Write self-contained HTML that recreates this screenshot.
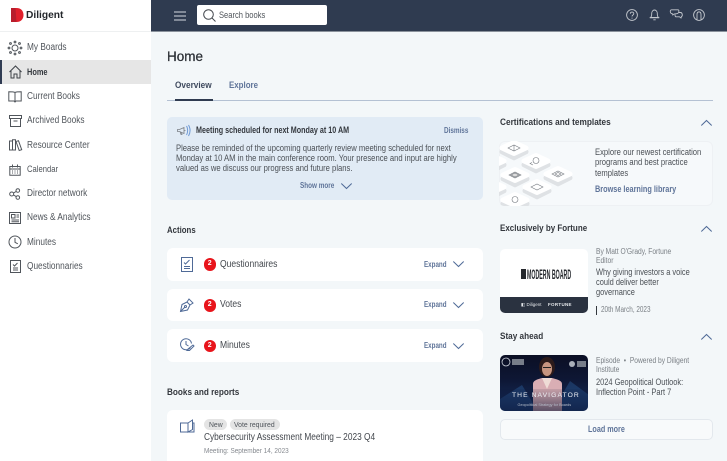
<!DOCTYPE html>
<html><head><meta charset="utf-8">
<style>
*{box-sizing:border-box}
html,body{margin:0;padding:0;width:727px;height:461px;overflow:hidden}
#w{position:absolute;left:0;top:0;width:727px;height:461px;overflow:hidden;background:#f3f7f9;font-family:"Liberation Sans",sans-serif;color:#33373d}
.t{position:absolute;white-space:nowrap;line-height:1;transform-origin:0 0}
.a{position:absolute}
svg{position:absolute;overflow:visible;fill:none}
.nav{font-size:9.8px;color:#50555b;left:27px;transform:scaleX(.845)}
.ic{stroke:#50555b;stroke-width:1}
.blue{stroke:#4f6a97;stroke-width:1}
.card{position:absolute;left:167px;width:316px;background:#fff;border-radius:6px}
.exp{font-size:8px;font-weight:bold;color:#5f7499;left:424px;transform:scaleX(.78)}
.badge{position:absolute;left:203.5px;width:12.5px;height:12.5px;border-radius:50%;background:#e8141b;color:#fff;font-size:7px;font-weight:bold;text-align:center;line-height:12.5px}
.lbl{font-size:9.9px;color:#44484e;left:220px;transform:scaleX(.865)}
.h{font-size:9.6px;font-weight:bold;color:#33373d}
.p{font-size:9px;color:#4b5056;transform:scaleX(.85)}
.q{font-size:9px;color:#4b5056;transform:scaleX(.826)}
.g{font-size:7.9px;color:#7b8086;transform:scaleX(.845)}
</style></head>
<body><div id="w">
<!-- sidebar -->
<div class="a" style="left:0;top:0;width:151px;height:461px;background:#fff"></div>
<div class="a" style="left:0;top:31px;width:151px;height:1px;background:#eef0f1"></div>
<div class="a" style="left:0;top:60px;width:151px;height:24px;background:#e6e6e6"></div>
<div class="a" style="left:0;top:60px;width:2px;height:24px;background:#2f3b52"></div>
<svg style="left:10px;top:8px" width="14" height="14"><path d="M1 0H6.5C11 0 13.5 3 13.5 7S11 14 6.5 14H1Z" fill="#e0202c"/><path d="M1 0H5.5L6.5 14H1Z" fill="#b81d2c"/></svg>
<div class="t" style="left:26px;top:10.5px;font-size:10.2px;font-weight:bold;color:#23262b">Diligent</div>

<svg class="ic" style="left:8px;top:41px" width="14" height="14"><circle cx="7" cy="7" r="3"/><circle cx="7" cy="1" r=".9"/><circle cx="7" cy="13" r=".9"/><circle cx="1" cy="7" r=".9"/><circle cx="13" cy="7" r=".9"/><circle cx="2.5" cy="2.5" r=".9"/><circle cx="11.5" cy="2.5" r=".9"/><circle cx="2.5" cy="11.5" r=".9"/><circle cx="11.5" cy="11.5" r=".9"/></svg>
<div class="t nav" style="top:42.7px">My Boards</div>
<svg style="left:9px;top:65px" width="13" height="14"><path d="M.5 7 6.5 1l6 6M2 6v7h3V9h3v4h3V6" stroke="#3d4147"/></svg>
<div class="t" style="left:27px;top:67.7px;font-size:8.8px;font-weight:bold;color:#33373d;transform:scaleX(.84)">Home</div>
<svg class="ic" style="left:8px;top:91px" width="14" height="12"><path d="M7 1.5C5.5.8 3 .8.8.8V10H6l1 1 1-1h5.2V.8C11 .8 8.5.8 7 1.5ZM7 1.5V11"/></svg>
<div class="t nav" style="top:91.7px">Current Books</div>
<svg class="ic" style="left:8.5px;top:115px" width="13" height="12"><path d="M.5.5h12v3H.5ZM1.5 3.500v8h10v-8M4.500 6h4"/></svg>
<div class="t nav" style="top:115.7px">Archived Books</div>
<svg class="ic" style="left:8.5px;top:139px" width="13" height="12"><path d="M.5 11V2h3v9ZM3.5 11V.8h3V11ZM7 2.5l2.5-.8 3.2 9-2.500.8Z"/></svg>
<div class="t nav" style="top:140.7px">Resource Center</div>
<svg class="ic" style="left:9px;top:164px" width="12" height="12"><path d="M.8 2.5h10.400v8.700H.8ZM.8 5h10.400M3.5.5v3M8.5.5v3M3 7h1M5.5 7h1M8 7h1M3 9h1M5.5 9h1M8 9h1"/></svg>
<div class="t" style="left:27px;top:165.2px;font-size:9px;color:#50555b;transform:scaleX(.85)">Calendar</div>
<svg class="ic" style="left:9px;top:188px" width="12" height="12"><circle cx="2.7" cy="6" r="2"/><circle cx="8.8" cy="2.5" r="1.8"/><circle cx="8.8" cy="9.5" r="1.8"/><path d="M4.5 5 7.2 3.4M4.5 7 7.2 8.6"/></svg>
<div class="t nav" style="top:189.2px">Director network</div>
<svg class="ic" style="left:9px;top:212px" width="12" height="12"><path d="M.5.5h11v11H.5ZM2.5 2.5h3.5V6H2.5ZM7.5 3H10M7.5 5H10M2.5 8H10M2.500 9.800H10"/></svg>
<div class="t nav" style="top:213.2px">News &amp; Analytics</div>
<svg class="ic" style="left:8px;top:235px" width="14" height="14"><circle cx="7" cy="7" r="6"/><path d="M7 3v4.300l2.800 1.500"/></svg>
<div class="t nav" style="top:237.7px">Minutes</div>
<svg class="ic" style="left:10px;top:260px" width="11" height="13"><path d="M.5.5h10v12H.5ZM3 4.5l1.500 1.500 3-3M3 8h5M3 10h5"/></svg>
<div class="t nav" style="top:262.2px">Questionnaries</div>

<!-- top bar -->
<div class="a" style="left:151px;top:0;width:576px;height:31px;background:#2f3b50"></div>
<div class="a" style="left:151px;top:31px;width:576px;height:1px;background:#8a929c"></div>
<svg style="left:174px;top:11px" width="12" height="10" stroke="#b4bac2" stroke-width="1.2"><path d="M0 1h12M0 5h12M0 9h12"/></svg>
<div class="a" style="left:197px;top:5px;width:130px;height:20px;background:#fff;border-radius:2px"></div>
<svg style="left:203px;top:9px" width="13" height="13" stroke="#44484e" stroke-width="1"><circle cx="5.5" cy="5.5" r="4.8"/><path d="M9 9l3.5 3.5"/></svg>
<div class="t" style="left:219px;top:11.2px;font-size:8.8px;color:#50555b;transform:scaleX(.86)">Search books</div>
<svg style="left:626px;top:9px" width="12" height="12" stroke="#c3c7cd" stroke-width=".9"><circle cx="6" cy="6" r="5.4"/><path d="M4.3 4.7C4.3 2.5 7.8 2.5 7.8 4.6 7.8 6 6 6 6 7.5M6 8.6v1"/></svg>
<svg style="left:649px;top:9px" width="11" height="12" stroke="#c3c7cd" stroke-width=".9"><path d="M1.5 8.5C2.8 7.5 2.7 6 2.7 4.5 2.7 2.5 4 1 5.5 1S8.3 2.5 8.3 4.5C8.3 6 8.2 7.5 9.500 8.500ZM.8 8.800h9.400M4.300 10.800h2.400"/></svg>
<svg style="left:670px;top:9px" width="13" height="12" stroke="#c3c7cd" stroke-width=".9"><path d="M1.5.8H8C9.5.8 9 3.8 7.5 4.6L4 5 2.8 6 2.5 4.8C0 4.8-.5.8 1.5.8ZM9 3.5h1.500C12.500 3.500 12.800 7 11.500 7.500L11 9 9.500 7.800H6C5 7.800 5 6.500 5 5.500"/></svg>
<svg style="left:693px;top:9px" width="12" height="12" stroke="#c3c7cd" stroke-width=".9"><circle cx="6" cy="6" r="5.4"/><path d="M4 10.500V5.500C4 2 8 2 8 5.500v5"/></svg>

<!-- header -->
<div class="t" style="left:167px;top:50px;font-size:13.5px;color:#2b2f35;-webkit-text-stroke:.25px #2b2f35">Home</div>
<div class="t" style="left:175px;top:81.2px;font-size:9.6px;font-weight:bold;color:#3f4a5e;transform:scaleX(.86)">Overview</div>
<div class="t" style="left:229px;top:81.2px;font-size:9.6px;font-weight:bold;color:#5f7499;transform:scaleX(.825)">Explore</div>
<div class="a" style="left:167px;top:99.5px;width:546px;height:1px;background:#b4c1d3"></div>
<div class="a" style="left:175px;top:99px;width:38px;height:1.5px;background:#2f3b50"></div>

<!-- alert -->
<div class="a" style="left:167px;top:117px;width:316px;height:83px;background:#e1ebf5;border-radius:5px"></div>
<svg style="left:177px;top:125px" width="15" height="12" stroke="#7b8086" stroke-width=".8"><path d="M.5 4.500h2L7 2.500v6L2.500 6.500h-2ZM3 6.500l1 3h1L4.500 7.500M7 5.500h1.500"/><path d="M9.500 1C11 3.500 11 7.500 9.500 10M11.500 0C13.500 3.500 13.500 7.500 11.500 11" stroke="#6f9ad6" stroke-width="1"/></svg>
<div class="t" style="left:195.5px;top:126.1px;font-size:8.8px;font-weight:bold;color:#33373d;transform:scaleX(.815)">Meeting scheduled for next Monday at 10 AM</div>
<div class="t" style="left:443.5px;top:126.7px;font-size:7.9px;font-weight:bold;color:#5f7499;transform:scaleX(.805)">Dismiss</div>
<div class="t p" style="left:175.5px;top:143.6px">Please be reminded of the upcoming quarterly review meeting scheduled for next</div>
<div class="t p" style="left:175.5px;top:153.6px">Monday at 10 AM in the main conference room. Your presence and input are highly</div>
<div class="t p" style="left:175.5px;top:163.6px">valued as we discuss our progress and future plans.</div>
<div class="t" style="left:299.5px;top:181.7px;font-size:8px;font-weight:bold;color:#5f7499;transform:scaleX(.795)">Show more</div>
<svg style="left:341px;top:183px" width="11" height="6" stroke="#4f6a97"><path d="M.3.500 5.500 5.500 10.700.5"/></svg>

<!-- actions -->
<div class="t h" style="left:167px;top:225.7px;transform:scaleX(.815)">Actions</div>
<div class="card" style="top:248px;height:33px"></div>
<div class="card" style="top:289px;height:32px"></div>
<div class="card" style="top:329px;height:33px"></div>
<svg class="blue" style="left:181px;top:257px" width="12" height="15"><path d="M.5.500h11v14H.5ZM3 5.500l1.500 1.500L8.500 3M3 9.500h6M3 11.500h6" /></svg>
<div class="badge" style="top:258.3px">2</div>
<div class="t lbl" style="top:259.7px">Questionnaires</div>
<div class="t exp" style="top:260.8px">Expand</div>
<svg style="left:453px;top:261px" width="11" height="6" stroke="#4f6a97"><path d="M.3.500 5.500 5.500 10.700.5"/></svg>
<svg class="blue" style="left:180px;top:298px" width="14" height="14"><path d="M.5 13.500 2 6.500 7 4l3 3-2.500 5ZM.5 13.500 5 9M7 4l2-3 4 4-3 2"/><circle cx="5.5" cy="8.5" r="1"/></svg>
<div class="badge" style="top:299px">2</div>
<div class="t lbl" style="top:300.2px">Votes</div>
<div class="t exp" style="top:301.3px">Expand</div>
<svg style="left:453px;top:302px" width="11" height="6" stroke="#4f6a97"><path d="M.3.500 5.500 5.500 10.700.5"/></svg>
<svg class="blue" style="left:180px;top:338px" width="15" height="14"><path d="M10.500 9.500A5.500 5.500 0 1 1 11.500 5.500M6 3v3.500l2.500 1.500M8 11l5-4 1 1-4.500 4.500H7Z"/></svg>
<div class="badge" style="top:339.500px">2</div>
<div class="t lbl" style="top:340.7px">Minutes</div>
<div class="t exp" style="top:341.8px">Expand</div>
<svg style="left:453px;top:343px" width="11" height="6" stroke="#4f6a97"><path d="M.3.500 5.500 5.500 10.700.5"/></svg>

<!-- books -->
<div class="t h" style="left:167px;top:387.7px;transform:scaleX(.853)">Books and reports</div>
<div class="card" style="top:410px;height:60px"></div>
<svg class="blue" style="left:180px;top:419px" width="15" height="14"><path d="M.5 4h7.500v9H.5ZM8 4l4.500-3v9.500L8 13ZM12.500 4h1.500v9H8"/></svg>
<div class="a" style="left:204px;top:419px;width:23px;height:11px;border-radius:6px;background:#e4e4e4"></div>
<div class="t" style="left:209px;top:420.800px;font-size:7.600px;color:#50555b;transform:scaleX(.9)">New</div>
<div class="a" style="left:229.500px;top:419px;width:50px;height:11px;border-radius:6px;background:#e4e4e4"></div>
<div class="t" style="left:234px;top:420.800px;font-size:7.600px;color:#50555b;transform:scaleX(.9)">Vote required</div>
<div class="t" style="left:203.500px;top:433.200px;font-size:10px;color:#44484e;transform:scaleX(.832)">Cybersecurity Assessment Meeting – 2023 Q4</div>
<div class="t" style="left:203.500px;top:447.300px;font-size:7.400px;color:#85898f;transform:scaleX(.87)">Meeting: September 14, 2023</div>

<!-- right col: cert -->
<div class="t h" style="left:499.500px;top:118.200px;transform:scaleX(.862)">Certifications and templates</div>
<svg style="left:701px;top:120px" width="11" height="6" stroke="#4f6a97"><path d="M.3 5.500 5.500.5 10.700 5.500"/></svg>
<div class="a" style="left:499px;top:141px;width:214px;height:65px;border-radius:6px;background:#f6f9fb;border:1px solid #eef1f4"></div>
<svg style="left:499px;top:141px" width="90" height="65">
<clipPath id="c"><rect width="90" height="65" rx="5"/></clipPath>
<defs><g id="d"><path d="M-12 2 0 -3.500 12 2 0 8Z" transform="translate(0 1.800)" fill="#dfe2e5" stroke="#dfe2e5" stroke-width="5" stroke-linejoin="round"/><path d="M-12 0 0 -5.500 12 0 0 5.500Z" fill="#fff" stroke="#fff" stroke-width="5" stroke-linejoin="round"/></g></defs>
<g clip-path="url(#c)">
<use href="#d" x="15" y="7"/><use href="#d" x="37" y="20"/><use href="#d" x="16" y="34"/><use href="#d" x="59" y="33"/><use href="#d" x="38" y="46"/><use href="#d" x="16" y="59"/><use href="#d" x="-7" y="20"/><use href="#d" x="-7" y="46"/>
<g stroke="#777c82" stroke-width=".6"><path d="M9 7l6-3 6 3-6 3ZM15 4v6"/><circle cx="37" cy="19.500" r="3"/><path d="M33 21.500l-2 1 3 1.500"/><path d="M10 34l6-3 6 3-6 3ZM12 34l4-2 4 2-4 2Z" fill="#ddd"/><path d="M53 33l6-3 6 3-6 3ZM56 33l3-1.500 3 1.500-3 1.500Z"/><path d="M32 46l6-3 6 3-6 3Z"/><circle cx="16" cy="58.500" r="3"/></g></g></svg>
<div class="t p" style="left:595px;top:148.100px">Explore our newest certification</div>
<div class="t p" style="left:595px;top:158.100px">programs and best practice</div>
<div class="t p" style="left:595px;top:168.600px">templates</div>
<div class="t" style="left:595px;top:185.100px;font-size:9px;font-weight:bold;color:#5f7499;transform:scaleX(.812)">Browse learning library</div>

<!-- fortune -->
<div class="t h" style="left:499.500px;top:223.700px;transform:scaleX(.834)">Exclusively by Fortune</div>
<svg style="left:701px;top:226px" width="11" height="6" stroke="#4f6a97"><path d="M.3 5.500 5.500.5 10.700 5.500"/></svg>
<div class="a" style="left:500px;top:249px;width:88px;height:64px;border-radius:5px;background:#fff;overflow:hidden">
<div class="a" style="left:0;top:48px;width:88px;height:16px;background:#2a3240"></div>
<div class="a" style="left:21px;top:20px;width:5px;height:10px;background:#25282d"></div>
<div class="t" style="left:26.500px;top:18.500px;font-size:13.500px;font-weight:bold;color:#25282d;transform:scaleX(.39)">MODERN BOARD</div>
<div class="t" style="left:21px;top:54px;font-size:4.500px;color:#e6e8eb">◧ Diligent</div>
<div class="t" style="left:48px;top:54px;font-size:4.500px;font-weight:bold;color:#e6e8eb;letter-spacing:.3px">FORTUNE</div>
</div>
<div class="t g" style="left:596px;top:247.700px">By Matt O'Grady, Fortune</div>
<div class="t g" style="left:596px;top:257.200px">Editor</div>
<div class="t q" style="left:596px;top:267.600px">Why giving investors a voice</div>
<div class="t q" style="left:596px;top:278.100px">could deliver better</div>
<div class="t q" style="left:596px;top:288.100px">governance</div>
<div class="a" style="left:596px;top:306px;width:1px;height:9px;background:#33373d"></div>
<div class="t g" style="left:600.500px;top:306.200px;transform:scaleX(.806)">20th March, 2023</div>

<!-- stay ahead -->
<div class="t h" style="left:499.500px;top:332.200px;transform:scaleX(.853)">Stay ahead</div>
<svg style="left:701px;top:334px" width="11" height="6" stroke="#4f6a97"><path d="M.3 5.500 5.500.5 10.700 5.500"/></svg>
<div class="a" style="left:499.500px;top:355px;width:88.500px;height:56px;border-radius:5px;overflow:hidden;background:linear-gradient(180deg,#0b0f24 0%,#0e1735 45%,#16305f 100%)">
<svg style="left:0;top:0" width="89" height="56"><path d="M0 56V44L22 30 34 50 56 50 70 26 89 40V56Z" fill="#2a5a94" opacity=".45"/><circle cx="6" cy="7" r="4" stroke="#cdd3dc" stroke-width=".8"/><rect x="12" y="4" width="12" height="6" fill="#777d89"/><circle cx="72" cy="9" r="3" fill="#aab0ba"/><rect x="77" y="6" width="9" height="6" fill="#777d89"/>
<path d="M33 56V29C33 25 39 24 42 23H52C55 24 62 25 62 29V56Z" fill="#d9aeb4"/><path d="M42 23 47 34 52 23Z" fill="#efdcd6"/><ellipse cx="47" cy="12" rx="8" ry="10" fill="#2c1b1b"/><ellipse cx="47" cy="14" rx="5" ry="7" fill="#c79580"/><path d="M43 12.500h8" stroke="#222" stroke-width="1"/></svg>
<div class="a" style="left:0;top:34px;width:89px;height:22px;background:linear-gradient(180deg,rgba(10,18,50,.1),rgba(10,18,50,.6))"></div>
<div class="t" style="left:12.500px;top:38px;font-size:6.700px;color:#eef0f4;letter-spacing:1.100px">THE NAVIGATOR</div>
<div class="t" style="left:18px;top:49px;font-size:3.800px;color:#b8bfcc">Geopolitical Strategy for Boards</div>
</div>
<div class="t g" style="left:596px;top:357.200px">Episode &nbsp;•&nbsp; Powered by Diligent</div>
<div class="t g" style="left:596px;top:366.200px">Institute</div>
<div class="t q" style="left:596px;top:377.600px">2024 Geopolitical Outlook:</div>
<div class="t q" style="left:596px;top:387.600px">Inflection Point - Part 7</div>
<div class="a" style="left:499.500px;top:419px;width:213.500px;height:21px;border-radius:5px;background:#f8fafb;border:1px solid #e3e8ed"></div>
<div class="t" style="left:588px;top:425.200px;font-size:8.800px;font-weight:bold;color:#5f7499;transform:scaleX(.82)">Load more</div>
</div></body></html>
